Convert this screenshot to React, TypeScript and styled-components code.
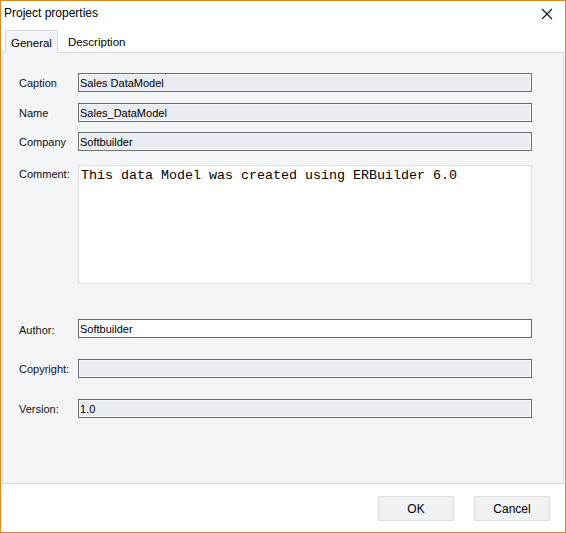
import styled, { createGlobalStyle } from "styled-components";

const GlobalStyle = createGlobalStyle`
  html, body {
    margin: 0;
    padding: 0;
    background: #ffffff;
  }
  * {
    box-sizing: border-box;
  }
`;

const Window = styled.div`
  width: 566px;
  height: 533px;
  border: 1px solid #e08a1e;
  background: #ffffff;
  display: flex;
  flex-direction: column;
  font-family: "Liberation Sans", Arial, sans-serif;
  color: #000;
`;

const TitleBar = styled.div`
  height: 29px;
  display: flex;
  align-items: flex-start;
  justify-content: space-between;
  padding: 5px 12px 0 3px;
  font-size: 12px;
`;

const CloseButton = styled.div`
  width: 12px;
  height: 12px;
  display: flex;
  align-items: center;
  justify-content: center;
  margin-top: 2px;
`;

const TabStrip = styled.div`
  display: flex;
  align-items: flex-end;
  height: 22px;
  padding-left: 4px;
  position: relative;
  z-index: 1;
`;

const Tab = styled.div<{ $active?: boolean }>`
  height: ${(p) => (p.$active ? "23px" : "21px")};
  padding: 0 5px;
  display: flex;
  align-items: center;
  font-size: 11.5px;
  border: 1px solid ${(p) => (p.$active ? "#d9d9d9" : "transparent")};
  border-bottom: none;
  background: ${(p) => (p.$active ? "#f4f5f7" : "transparent")};
  margin-bottom: ${(p) => (p.$active ? "-1px" : "0")};
  padding-top: ${(p) => (p.$active ? "1px" : "0")};
  margin-right: ${(p) => (p.$active ? "4px" : "0")};
`;

const Panel = styled.div`
  margin: 0 1px 0 1px;
  height: 432px;
  border: 1px solid #d9d9d9;
  background: #f4f5f7;
  padding: 20px 31px 0 16px;
  display: flex;
  flex-direction: column;
`;

const Row = styled.div<{ $top: number }>`
  display: flex;
  align-items: flex-start;
  margin-top: ${(p) => p.$top}px;
`;

const Label = styled.div<{ $offset?: number }>`
  width: 59px;
  font-size: 11px;
  padding-top: ${(p) => p.$offset ?? 4}px;
  color: #111;
`;

const Field = styled.div<{ $editable?: boolean }>`
  flex: 1;
  height: 19px;
  border: 1px solid #6d6d6d;
  background: ${(p) => (p.$editable ? "#ffffff" : "#e9ecf0")};
  box-shadow: ${(p) => (p.$editable ? "none" : "inset 0 0 0 1px #f6f7f9")};
  font-size: 11px;
  padding: 2px 0 0 1px;
  line-height: 14px;
  white-space: nowrap;
`;

const Memo = styled.div`
  flex: 1;
  height: 119px;
  border: 1px solid #dcdcdc;
  background: #ffffff;
  font-family: "Liberation Mono", "Courier New", monospace;
  font-size: 13.33px;
  padding: 2px 0 0 2px;
  line-height: 16px;
  color: #000;
`;

const Footer = styled.div`
  flex: 1;
  display: flex;
  justify-content: flex-end;
  align-items: flex-start;
  gap: 20px;
  padding: 12px 15px 0 0;
`;

const Button = styled.div`
  width: 76px;
  height: 25px;
  border: 1px solid #dcdcdc;
  background: #f0f1f3;
  display: flex;
  align-items: center;
  justify-content: center;
  font-size: 12px;
`;

export default function App() {
  return (
    <>
      <GlobalStyle />
      <Window>
        <TitleBar>
          <span>Project properties</span>
          <CloseButton>
            <svg width="12" height="12" viewBox="0 0 12 12">
              <path d="M1 1 L11 11 M11 1 L1 11" stroke="#111" strokeWidth="1.1" />
            </svg>
          </CloseButton>
        </TitleBar>
        <TabStrip>
          <Tab $active>General</Tab>
          <Tab>Description</Tab>
        </TabStrip>
        <Panel>
          <Row $top={0}>
            <Label>Caption</Label>
            <Field>Sales DataModel</Field>
          </Row>
          <Row $top={11}>
            <Label>Name</Label>
            <Field>Sales_DataModel</Field>
          </Row>
          <Row $top={10}>
            <Label>Company</Label>
            <Field>Softbuilder</Field>
          </Row>
          <Row $top={14}>
            <Label $offset={3}>Comment:</Label>
            <Memo>This data Model was created using ERBuilder 6.0</Memo>
          </Row>
          <Row $top={35}>
            <Label $offset={5}>Author:</Label>
            <Field $editable>Softbuilder</Field>
          </Row>
          <Row $top={21}>
            <Label>Copyright:</Label>
            <Field />
          </Row>
          <Row $top={21}>
            <Label>Version:</Label>
            <Field>1.0</Field>
          </Row>
        </Panel>
        <Footer>
          <Button>OK</Button>
          <Button>Cancel</Button>
        </Footer>
      </Window>
    </>
  );
}
